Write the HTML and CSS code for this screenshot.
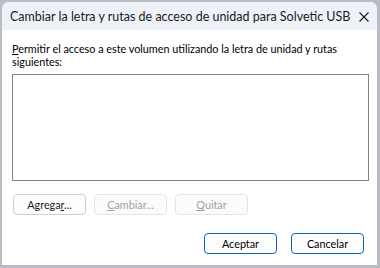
FILE: index.html
```html
<!DOCTYPE html>
<html lang="es">
<head>
    <meta charset="UTF-8">
    <title>Cambiar la letra y rutas de acceso de unidad</title>
    <link rel="stylesheet" href="styles.css">
</head>
<body>

<div class="dialog">
    <div class="titlebar">
        <span class="title">Cambiar la letra y rutas de acceso de unidad para Solvetic USB</span>
        <span class="close">
            <svg width="10" height="10" viewBox="0 0 10 10">
                <path d="M0.5 0.5 L9.5 9.5 M9.5 0.5 L0.5 9.5" stroke="#1a1a1a" stroke-width="1.1"/>
            </svg>
        </span>
    </div>

    <div class="content">
        <p class="label">Permitir el acceso a este volumen utilizando la letra de unidad y rutas siguientes:</p>

        <div class="listbox"></div>

        <div class="actions">
            <button class="btn">Agrega<u>r</u>...</button>
            <button class="btn" disabled><u>C</u>ambiar...</button>
            <button class="btn" disabled><u>Q</u>uitar</button>
        </div>

        <div class="footer">
            <button class="btn primary">Aceptar</button>
            <button class="btn primary">Cancelar</button>
        </div>
    </div>
</div>

</body>
</html>
```

FILE: styles.css
```css
body {
    margin: 0;
    padding: 2px 0 0 2px;
    background-color: #b9bcc2;
    font-family: Lato, "Liberation Sans", sans-serif;
    font-size: 10.8px;
    color: #1a1a1a;
    height: 268px;
    box-sizing: border-box;
    overflow: hidden;
}

.dialog {
    width: 375px;
    height: 263px;
    background-color: white;
    border-radius: 7px 7px 0 0;
    overflow: hidden;
    display: flex;
    flex-direction: column;
}

.titlebar {
    height: 28px;
    flex-shrink: 0;
    background-color: #eef2f8;
    display: flex;
    align-items: center;
    justify-content: space-between;
    padding: 0 8px 0 8px;
}

.title {
    font-size: 12.5px;
    color: #1a1a1a;
}

.close {
    display: flex;
    margin-top: 1px;
}

.content {
    padding: 12px 8px 0 10px;
}

.label {
    margin: 0;
    width: 330px;
    line-height: 13px;
    color: #000;
}

.label::first-letter {
    text-decoration: underline;
    text-decoration-thickness: 1px;
    text-underline-offset: 1px;
}

u {
    text-decoration-thickness: 1px;
    text-underline-offset: 1px;
}

.listbox {
    margin-top: 6px;
    width: 355px;
    height: 105px;
    border: 1px solid #82828c;
}

.btn {
    width: 73px;
    height: 21px;
    padding: 0;
    font-family: inherit;
    font-size: 10.8px;
    color: #1a1a1a;
    background-color: #fdfdfd;
    border: 1px solid #cfcfcf;
    border-radius: 4px;
}

.btn:disabled {
    color: #a0a0a0;
    border-color: #e5e5e5;
    background-color: #fbfbfb;
}

.actions {
    display: flex;
    gap: 8px;
    margin-top: 13px;
    padding-left: 1px;
}

.footer {
    display: flex;
    justify-content: flex-end;
    gap: 14px;
    margin-top: 18px;
    padding-right: 5px;
}

.btn.primary {
    height: 21px;
    border: 1.5px solid #0a67c2;
    color: #000;
}
```
